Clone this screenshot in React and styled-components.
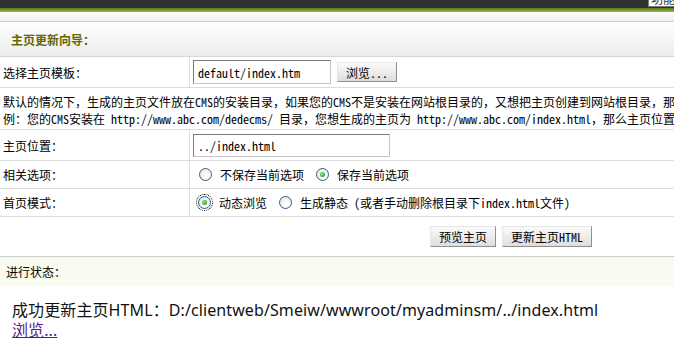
import React from 'react';
import styled, { createGlobalStyle } from 'styled-components';

const Global = createGlobalStyle`
  html, body { margin: 0; padding: 0; background: #fff; overflow: hidden; }
  body {
    width: 674px; height: 364px;
    font-family: "Noto Sans Mono CJK SC", "Noto Sans CJK SC", sans-serif;
    font-size: 12px; color: #000;
  }
`;

const TopBar = styled.div`
  height: 8px; background: #323232;
  display: flex; justify-content: flex-end; overflow: hidden;
`;
const TopBox = styled.div`
  width: 23px; height: 6px; padding-left: 2px;
  background: #fff; border: 1px solid #7a7a7a; border-top: none; border-right: none;
  overflow: hidden; font-size: 12px; line-height: 12px; color: #333; white-space: nowrap;
  & > span { display: block; margin-top: -7px; }
`;
const GreenLine = styled.div`
  height: 4px; background: linear-gradient(#56761a, #97b548);
`;
const SubBar = styled.div`
  height: 9px; background: linear-gradient(#fbfbfb, #f0f0f0);
  border-bottom: 1px solid #cdcdcd;
`;
const Header = styled.div`
  height: 34px; padding-left: 11px;
  display: flex; align-items: center;
  background: linear-gradient(#ffffff, #ececec);
  border-bottom: 1px solid #d6d6d6;
`;
const Title = styled.span`
  font-weight: bold; color: #666600; font-size: 12px;
`;

const Row = styled.div`
  display: grid; grid-template-columns: 190px 1fr;
  height: ${p => p.$h}px;
  border-bottom: ${p => (p.$noBorder ? 'none' : '1px solid #dcdcdc')};
`;
const Label = styled.div`
  border-right: 1px solid #dcdcdc;
  padding-left: 3px; display: flex; align-items: center;
`;
const Cell = styled.div`
  display: flex; align-items: center; gap: ${p => p.$gap || 0}px;
  padding-left: ${p => p.$pl || 3}px;
  white-space: nowrap;
`;
const Desc = styled.div`
  height: 42px; border-bottom: 1px solid #dcdcdc;
  padding: 5px 0 0 3px; box-sizing: border-box;
  line-height: 17px; white-space: nowrap; overflow: hidden;
`;

const TextInput = styled.input`
  box-sizing: border-box; width: ${p => p.$w}px; height: ${p => p.$h}px;
  margin: 0; padding: 0 4px;
  border: 1px solid; border-color: #7b7b7b #c6c6c6 #c6c6c6 #7b7b7b;
  font-family: "Noto Sans Mono CJK SC", "Liberation Mono", monospace;
  font-size: 12px; color: #000; background: #fff; outline: none;
`;
const Btn = styled.button`
  box-sizing: border-box; height: ${p => p.$h || 21}px;
  padding: 0 ${p => p.$px || 8}px; margin: 0;
  border: 1px solid; border-color: #e6e6e6 #8e8e8e #8e8e8e #e6e6e6;
  background: linear-gradient(#fafafa, #dedede);
  font-family: "Noto Sans Mono CJK SC", "Noto Sans CJK SC", sans-serif;
  font-size: 12px; color: #000; cursor: pointer;
`;

const RadioWrap = styled.label`
  display: inline-flex; align-items: center; gap: 8px; margin-right: 12px;
`;
const RadioDot = styled.span`
  box-sizing: border-box; width: 13px; height: 13px; border-radius: 50%;
  border: 1px solid #2c5f8e; position: relative;
  background: radial-gradient(circle at 65% 65%, #ffffff 20%, #dcdcd6 100%);
  outline: ${p => (p.$focus ? '1px dotted #000' : 'none')};
  outline-offset: 1px;
  &::after {
    content: ''; display: ${p => (p.$on ? 'block' : 'none')};
    position: absolute; left: 3px; top: 3px; width: 5px; height: 5px; border-radius: 50%;
    background: radial-gradient(circle at 40% 40%, #9ef08e 0%, #27a127 70%);
  }
`;

const Radio = ({ on, focus, children }) => (
  <RadioWrap>
    <RadioDot $on={on} $focus={focus} />
    <span>{children}</span>
  </RadioWrap>
);

const ActionCell = styled.div`
  grid-column: 2; display: flex; gap: 6px; padding: 9px 0 0 240px;
`;

const Status = styled.div`
  height: 30px; box-sizing: border-box; border-top: 1px solid #cfcfcf;
  background: #f9fbef; padding-left: 6px;
  display: flex; align-items: center;
`;

const Result = styled.div`
  padding: 14px 0 0 12px;
  font-family: "Noto Sans", "Noto Sans CJK SC", sans-serif;
  font-size: 16px; line-height: 20px; color: #111; letter-spacing: 0.1px;
  white-space: nowrap;
`;
const Link = styled.a`
  color: #551a8b; text-decoration: underline; cursor: pointer;
`;

export default function App() {
  return (
    <>
      <Global />
      <TopBar>
        <TopBox><span>功能</span></TopBox>
      </TopBar>
      <GreenLine />
      <SubBar />
      <Header><Title>主页更新向导：</Title></Header>

      <Row $h={30}>
        <Label>选择主页模板：</Label>
        <Cell $gap={6}>
          <TextInput $w={138} $h={24} defaultValue="default/index.htm" />
          <Btn $h={20}>浏览...</Btn>
        </Cell>
      </Row>
      <Desc>
        默认的情况下，生成的主页文件放在CMS的安装目录，如果您的CMS不是安装在网站根目录的，又想把主页创建到网站根目录，那么你就需要用相对的方法表示，
        <br />
        例：您的CMS安装在 http://www.abc.com/dedecms/ 目录，您想生成的主页为 http://www.abc.com/index.html，那么主页位置就应该用"../index.html"
      </Desc>
      <Row $h={30}>
        <Label>主页位置：</Label>
        <Cell>
          <TextInput $w={197} $h={23} defaultValue="../index.html" />
        </Cell>
      </Row>
      <Row $h={27}>
        <Label>相关选项：</Label>
        <Cell $pl={9}>
          <Radio>不保存当前选项</Radio>
          <Radio on>保存当前选项</Radio>
        </Cell>
      </Row>
      <Row $h={27}>
        <Label>首页模式：</Label>
        <Cell $pl={8}>
          <Radio on focus>动态浏览</Radio>
          <Radio>生成静态 (或者手动删除根目录下index.html文件)</Radio>
        </Cell>
      </Row>
      <Row $h={39} $noBorder>
        <ActionCell>
          <Btn>预览主页</Btn>
          <Btn>更新主页HTML</Btn>
        </ActionCell>
      </Row>
      <Status>进行状态：</Status>
      <Result>
        成功更新主页HTML：D:/clientweb/Smeiw/wwwroot/myadminsm/../index.html
        <br />
        <Link>浏览...</Link>
      </Result>
    </>
  );
}
